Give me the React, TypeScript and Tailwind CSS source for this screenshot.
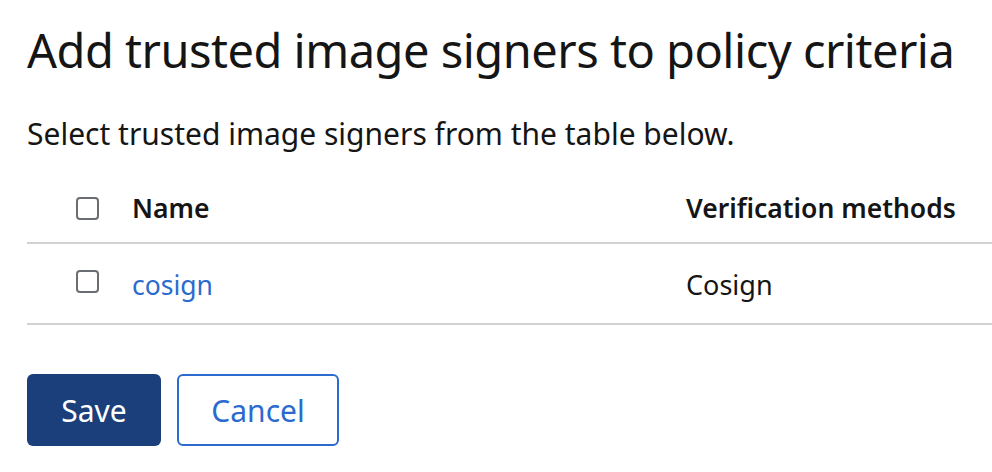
export default function App() {
  const font = { fontFamily: '"Noto Sans", "Open Sans", sans-serif' };
  return (
    <div className="w-[992px] h-[472px] bg-white overflow-hidden text-[#151515]" style={font}>
      <div className="pl-[27px] pt-[20px]">
        <h1 className="text-[47px] leading-[60px] font-normal tracking-[-0.5px] whitespace-nowrap">
          Add trusted image signers to policy criteria
        </h1>
        <p className="mt-[34px] text-[30px] leading-[40px] whitespace-nowrap">
          Select trusted image signers from the table below.
        </p>

        <div className="mt-[21px] w-[965px]">
          {/* header row */}
          <div className="flex items-center h-[69px] border-b-2 border-[#d2d2d2]">
            <div className="w-[105px] pl-[49px] flex items-center">
              <Checkbox />
            </div>
            <div className="w-[554px] text-[26.5px] font-semibold">Name</div>
            <div className="text-[26.5px] font-semibold whitespace-nowrap">Verification methods</div>
          </div>
          {/* body row */}
          <div className="flex items-center h-[81px] border-b-2 border-[#d2d2d2]">
            <div className="w-[105px] pl-[49px] flex items-center -mt-[4px]">
              <Checkbox />
            </div>
            <a className="w-[554px] pt-[4px] text-[26.5px] text-[#2b6bcf]">cosign</a>
            <div className="pt-[4px] text-[27px]">Cosign</div>
          </div>
        </div>

        <div className="mt-[49px] flex gap-[16px]">
          <button className="w-[134px] h-[72px] rounded-[6px] bg-[#1b3f7b] text-white text-[30px]">
            Save
          </button>
          <button className="w-[162px] h-[72px] rounded-[6px] border-2 border-[#2b6bcf] text-[#2b6bcf] text-[30px]">
            Cancel
          </button>
        </div>
      </div>
    </div>
  );
}

function Checkbox() {
  return (
    <span className="block w-[23px] h-[23px] rounded-[4px] border-2 border-[#6a6e73] bg-white" />
  );
}
